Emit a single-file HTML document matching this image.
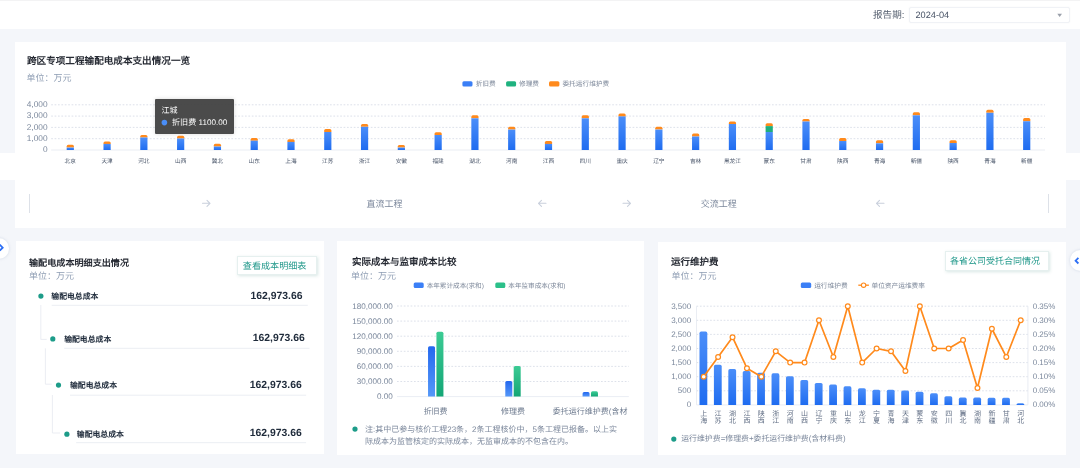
<!DOCTYPE html>
<html lang="zh-CN"><head><meta charset="utf-8">
<style>
html,body{margin:0;padding:0;}
*{text-rendering:geometricPrecision;}
body{width:1080px;height:468px;overflow:hidden;background:#f4f6fa;position:relative;font-family:"Liberation Sans", sans-serif;}
.abs{position:absolute;}
.card{position:absolute;background:#fff;}
.t{position:absolute;white-space:nowrap;line-height:1;}
svg{position:absolute;left:0;top:0;overflow:visible;}
svg text{font-family:"Liberation Sans", sans-serif;}
#root{position:absolute;left:0;top:0;width:1080px;height:468px;will-change:transform;background:#f4f6fa;}
</style></head><body><div id="root">
<!-- header -->
<div class="abs" style="left:0;top:0;width:1080px;height:1px;background:#f3f3f4"></div>
<div class="abs" style="left:0;top:1px;width:1080px;height:28px;background:#fff"></div>
<div class="t" style="left:873px;top:10.5px;font-size:9.6px;color:#566070">报告期:</div>
<div class="abs" style="left:909.3px;top:7.3px;width:160.5px;height:15.5px;box-sizing:border-box;border:1px solid #f0f2f6;border-radius:2px;background:#fff;box-shadow:0 0 2px rgba(0,0,0,0.04)"></div>
<div class="t" style="left:915.5px;top:10.5px;font-size:9.2px;color:#465164">2024-04</div>
<svg width="1080" height="468" style="z-index:2"><path d="M1057.3,13.8 L1062,13.8 L1059.65,16.9 Z" fill="#9aa0aa"/></svg>

<!-- top card -->
<div class="card" style="left:15px;top:42px;width:1051px;height:186px"></div>
<div class="abs" style="left:0;top:153px;width:1080px;height:27px;background:#fff"></div>
<div class="t" style="left:27px;top:56.5px;font-size:9.6px;font-weight:bold;color:#262a33">跨区专项工程输配电成本支出情况一览</div>
<div class="t" style="left:26.5px;top:74px;font-size:9px;color:#8e9db3">单位：万元</div>

<svg width="1080" height="468">
<defs>
<linearGradient id="gBlue" x1="0" y1="0" x2="0" y2="1"><stop offset="0" stop-color="#4b8ef9"/><stop offset="1" stop-color="#1f6cf0"/></linearGradient>
<linearGradient id="gBlue2" x1="0" y1="0" x2="0" y2="1"><stop offset="0" stop-color="#2468ef"/><stop offset="1" stop-color="#5598f8"/></linearGradient>
<linearGradient id="gGreen" x1="0" y1="0" x2="0" y2="1"><stop offset="0" stop-color="#3ccb94"/><stop offset="1" stop-color="#14a676"/></linearGradient>
</defs>
<!-- top legend -->
<rect x="462.4" y="81.2" width="10.1" height="5.3" rx="1.5" fill="#3b7ff6"/>
<text x="475.7" y="86.2" font-size="6.7" fill="#7d889a">折旧费</text>
<rect x="506.1" y="81.2" width="10" height="5.3" rx="1.5" fill="#1fb27f"/>
<text x="519" y="86.2" font-size="6.7" fill="#7d889a">修理费</text>
<rect x="549" y="81.2" width="10.4" height="5.3" rx="1.5" fill="#ff8a1c"/>
<text x="562.4" y="86.2" font-size="6.7" fill="#7d889a">委托运行维护费</text>
<line x1="51.2" y1="138.70" x2="1045" y2="138.70" stroke="#d9dee8" stroke-width="0.9" stroke-dasharray="1.7,1.7"/>
<line x1="51.2" y1="127.40" x2="1045" y2="127.40" stroke="#d9dee8" stroke-width="0.9" stroke-dasharray="1.7,1.7"/>
<line x1="51.2" y1="116.10" x2="1045" y2="116.10" stroke="#d9dee8" stroke-width="0.9" stroke-dasharray="1.7,1.7"/>
<line x1="51.2" y1="104.80" x2="1045" y2="104.80" stroke="#d9dee8" stroke-width="0.9" stroke-dasharray="1.7,1.7"/>
<line x1="51.2" y1="150" x2="1045" y2="150" stroke="#e4e8f0" stroke-width="0.8"/>
<text x="47.5" y="152.20" font-size="8.3" fill="#7b889c" font-weight="normal" text-anchor="end" >0</text>
<text x="47.5" y="140.90" font-size="8.3" fill="#7b889c" font-weight="normal" text-anchor="end" >1,000</text>
<text x="47.5" y="129.60" font-size="8.3" fill="#7b889c" font-weight="normal" text-anchor="end" >2,000</text>
<text x="47.5" y="118.30" font-size="8.3" fill="#7b889c" font-weight="normal" text-anchor="end" >3,000</text>
<text x="47.5" y="107.00" font-size="8.3" fill="#7b889c" font-weight="normal" text-anchor="end" >4,000</text>
<path d="M66.69,147.60 V146.20 Q66.69,144.70 68.19,144.70 H72.39 Q73.89,144.70 73.89,146.20 V147.60 Z" fill="#ff8a1c"/>
<rect x="66.69" y="147.60" width="7.2" height="2.4" fill="url(#gBlue)"/>
<text x="70.29" y="162.6" font-size="5.7" fill="#4a566a" font-weight="normal" text-anchor="middle" >北京</text>
<path d="M103.48,143.90 V142.90 Q103.48,141.40 104.98,141.40 H109.18 Q110.68,141.40 110.68,142.90 V143.90 Z" fill="#ff8a1c"/>
<rect x="103.48" y="143.90" width="7.2" height="6.1" fill="url(#gBlue)"/>
<text x="107.08" y="162.6" font-size="5.7" fill="#4a566a" font-weight="normal" text-anchor="middle" >天津</text>
<path d="M140.26,137.50 V136.50 Q140.26,135.00 141.76,135.00 H145.96 Q147.46,135.00 147.46,136.50 V137.50 Z" fill="#ff8a1c"/>
<rect x="140.26" y="137.50" width="7.2" height="12.5" fill="url(#gBlue)"/>
<text x="143.86" y="162.6" font-size="5.7" fill="#4a566a" font-weight="normal" text-anchor="middle" >河北</text>
<path d="M177.05,138.50 V137.30 Q177.05,135.80 178.55,135.80 H182.75 Q184.25,135.80 184.25,137.30 V138.50 Z" fill="#ff8a1c"/>
<rect x="177.05" y="138.50" width="7.2" height="11.5" fill="url(#gBlue)"/>
<text x="180.65" y="162.6" font-size="5.7" fill="#4a566a" font-weight="normal" text-anchor="middle" >山西</text>
<path d="M213.83,146.50 V145.25 Q213.83,143.75 215.33,143.75 H219.53 Q221.03,143.75 221.03,145.25 V146.50 Z" fill="#ff8a1c"/>
<rect x="213.83" y="146.50" width="7.2" height="3.5" fill="url(#gBlue)"/>
<text x="217.43" y="162.6" font-size="5.7" fill="#4a566a" font-weight="normal" text-anchor="middle" >冀北</text>
<path d="M250.62,140.70 V139.40 Q250.62,137.90 252.12,137.90 H256.32 Q257.82,137.90 257.82,139.40 V140.70 Z" fill="#ff8a1c"/>
<rect x="250.62" y="140.70" width="7.2" height="9.3" fill="url(#gBlue)"/>
<text x="254.22" y="162.6" font-size="5.7" fill="#4a566a" font-weight="normal" text-anchor="middle" >山东</text>
<path d="M287.40,141.90 V140.70 Q287.40,139.20 288.90,139.20 H293.10 Q294.60,139.20 294.60,140.70 V141.90 Z" fill="#ff8a1c"/>
<rect x="287.40" y="141.90" width="7.2" height="8.1" fill="url(#gBlue)"/>
<text x="291.00" y="162.6" font-size="5.7" fill="#4a566a" font-weight="normal" text-anchor="middle" >上海</text>
<path d="M324.19,132.00 V130.40 Q324.19,128.90 325.69,128.90 H329.89 Q331.39,128.90 331.39,130.40 V132.00 Z" fill="#ff8a1c"/>
<rect x="324.19" y="132.00" width="7.2" height="18" fill="url(#gBlue)"/>
<text x="327.79" y="162.6" font-size="5.7" fill="#4a566a" font-weight="normal" text-anchor="middle" >江苏</text>
<path d="M360.97,126.80 V125.40 Q360.97,123.90 362.47,123.90 H366.67 Q368.17,123.90 368.17,125.40 V126.80 Z" fill="#ff8a1c"/>
<rect x="360.97" y="126.80" width="7.2" height="23.2" fill="url(#gBlue)"/>
<text x="364.57" y="162.6" font-size="5.7" fill="#4a566a" font-weight="normal" text-anchor="middle" >浙江</text>
<path d="M397.76,147.60 V146.40 Q397.76,144.90 399.26,144.90 H403.46 Q404.96,144.90 404.96,146.40 V147.60 Z" fill="#ff8a1c"/>
<rect x="397.76" y="147.60" width="7.2" height="2.4" fill="url(#gBlue)"/>
<text x="401.36" y="162.6" font-size="5.7" fill="#4a566a" font-weight="normal" text-anchor="middle" >安徽</text>
<path d="M434.54,135.00 V133.70 Q434.54,132.20 436.04,132.20 H440.24 Q441.74,132.20 441.74,133.70 V135.00 Z" fill="#ff8a1c"/>
<rect x="434.54" y="135.00" width="7.2" height="15" fill="url(#gBlue)"/>
<text x="438.14" y="162.6" font-size="5.7" fill="#4a566a" font-weight="normal" text-anchor="middle" >福建</text>
<path d="M471.33,118.30 V116.80 Q471.33,115.30 472.83,115.30 H477.03 Q478.53,115.30 478.53,116.80 V118.30 Z" fill="#ff8a1c"/>
<rect x="471.33" y="118.30" width="7.2" height="31.7" fill="url(#gBlue)"/>
<text x="474.93" y="162.6" font-size="5.7" fill="#4a566a" font-weight="normal" text-anchor="middle" >湖北</text>
<path d="M508.11,129.60 V128.20 Q508.11,126.70 509.61,126.70 H513.81 Q515.31,126.70 515.31,128.20 V129.60 Z" fill="#ff8a1c"/>
<rect x="508.11" y="129.60" width="7.2" height="20.4" fill="url(#gBlue)"/>
<text x="511.71" y="162.6" font-size="5.7" fill="#4a566a" font-weight="normal" text-anchor="middle" >河南</text>
<path d="M544.90,143.90 V142.50 Q544.90,141.00 546.40,141.00 H550.60 Q552.10,141.00 552.10,142.50 V143.90 Z" fill="#ff8a1c"/>
<rect x="544.90" y="143.90" width="7.2" height="6.1" fill="url(#gBlue)"/>
<text x="548.50" y="162.6" font-size="5.7" fill="#4a566a" font-weight="normal" text-anchor="middle" >江西</text>
<path d="M581.69,118.30 V116.80 Q581.69,115.30 583.19,115.30 H587.39 Q588.89,115.30 588.89,116.80 V118.30 Z" fill="#ff8a1c"/>
<rect x="581.69" y="118.30" width="7.2" height="31.7" fill="url(#gBlue)"/>
<text x="585.29" y="162.6" font-size="5.7" fill="#4a566a" font-weight="normal" text-anchor="middle" >四川</text>
<path d="M618.47,116.40 V115.00 Q618.47,113.50 619.97,113.50 H624.17 Q625.67,113.50 625.67,115.00 V116.40 Z" fill="#ff8a1c"/>
<rect x="618.47" y="116.40" width="7.2" height="33.6" fill="url(#gBlue)"/>
<text x="622.07" y="162.6" font-size="5.7" fill="#4a566a" font-weight="normal" text-anchor="middle" >重庆</text>
<path d="M655.26,129.60 V128.20 Q655.26,126.70 656.76,126.70 H660.96 Q662.46,126.70 662.46,128.20 V129.60 Z" fill="#ff8a1c"/>
<rect x="655.26" y="129.60" width="7.2" height="20.4" fill="url(#gBlue)"/>
<text x="658.86" y="162.6" font-size="5.7" fill="#4a566a" font-weight="normal" text-anchor="middle" >辽宁</text>
<path d="M692.04,136.50 V135.10 Q692.04,133.60 693.54,133.60 H697.74 Q699.24,133.60 699.24,135.10 V136.50 Z" fill="#ff8a1c"/>
<rect x="692.04" y="136.50" width="7.2" height="13.5" fill="url(#gBlue)"/>
<text x="695.64" y="162.6" font-size="5.7" fill="#4a566a" font-weight="normal" text-anchor="middle" >吉林</text>
<path d="M728.83,124.00 V123.00 Q728.83,121.50 730.33,121.50 H734.53 Q736.03,121.50 736.03,123.00 V124.00 Z" fill="#ff8a1c"/>
<rect x="728.83" y="124.00" width="7.2" height="26" fill="url(#gBlue)"/>
<text x="732.43" y="162.6" font-size="5.7" fill="#4a566a" font-weight="normal" text-anchor="middle" >黑龙江</text>
<path d="M765.61,126.10 V124.80 Q765.61,123.30 767.11,123.30 H771.31 Q772.81,123.30 772.81,124.80 V126.10 Z" fill="#ff8a1c"/>
<rect x="765.61" y="126.10" width="7.2" height="5.9" fill="#1fae7d"/>
<rect x="765.61" y="132.00" width="7.2" height="18" fill="url(#gBlue)"/>
<text x="769.21" y="162.6" font-size="5.7" fill="#4a566a" font-weight="normal" text-anchor="middle" >蒙东</text>
<path d="M802.40,121.50 V120.50 Q802.40,119.00 803.90,119.00 H808.10 Q809.60,119.00 809.60,120.50 V121.50 Z" fill="#ff8a1c"/>
<rect x="802.40" y="121.50" width="7.2" height="28.5" fill="url(#gBlue)"/>
<text x="806.00" y="162.6" font-size="5.7" fill="#4a566a" font-weight="normal" text-anchor="middle" >甘肃</text>
<path d="M839.18,141.00 V139.40 Q839.18,137.90 840.68,137.90 H844.88 Q846.38,137.90 846.38,139.40 V141.00 Z" fill="#ff8a1c"/>
<rect x="839.18" y="141.00" width="7.2" height="9" fill="url(#gBlue)"/>
<text x="842.78" y="162.6" font-size="5.7" fill="#4a566a" font-weight="normal" text-anchor="middle" >陕西</text>
<path d="M875.97,143.30 V141.80 Q875.97,140.30 877.47,140.30 H881.67 Q883.17,140.30 883.17,141.80 V143.30 Z" fill="#ff8a1c"/>
<rect x="875.97" y="143.30" width="7.2" height="6.7" fill="url(#gBlue)"/>
<text x="879.57" y="162.6" font-size="5.7" fill="#4a566a" font-weight="normal" text-anchor="middle" >青海</text>
<path d="M912.75,115.30 V113.70 Q912.75,112.20 914.25,112.20 H918.45 Q919.95,112.20 919.95,113.70 V115.30 Z" fill="#ff8a1c"/>
<rect x="912.75" y="115.30" width="7.2" height="34.7" fill="url(#gBlue)"/>
<text x="916.35" y="162.6" font-size="5.7" fill="#4a566a" font-weight="normal" text-anchor="middle" >新疆</text>
<path d="M949.54,143.00 V141.80 Q949.54,140.30 951.04,140.30 H955.24 Q956.74,140.30 956.74,141.80 V143.00 Z" fill="#ff8a1c"/>
<rect x="949.54" y="143.00" width="7.2" height="7" fill="url(#gBlue)"/>
<text x="953.14" y="162.6" font-size="5.7" fill="#4a566a" font-weight="normal" text-anchor="middle" >陕西</text>
<path d="M986.32,112.80 V111.20 Q986.32,109.70 987.82,109.70 H992.02 Q993.52,109.70 993.52,111.20 V112.80 Z" fill="#ff8a1c"/>
<rect x="986.32" y="112.80" width="7.2" height="37.2" fill="url(#gBlue)"/>
<text x="989.92" y="162.6" font-size="5.7" fill="#4a566a" font-weight="normal" text-anchor="middle" >青海</text>
<path d="M1023.11,121.25 V119.50 Q1023.11,118.00 1024.61,118.00 H1028.81 Q1030.31,118.00 1030.31,119.50 V121.25 Z" fill="#ff8a1c"/>
<rect x="1023.11" y="121.25" width="7.2" height="28.75" fill="url(#gBlue)"/>
<text x="1026.71" y="162.6" font-size="5.7" fill="#4a566a" font-weight="normal" text-anchor="middle" >新疆</text>
</svg>


<!-- tooltip -->
<div class="abs" style="left:155.3px;top:98.9px;width:78.5px;height:35px;background:rgba(60,60,60,0.92);border-radius:1px;box-shadow:0 0 4px rgba(0,0,0,0.15)"></div>
<div class="t" style="left:161.5px;top:106.8px;font-size:8px;color:#fff">江城</div>
<svg width="1080" height="468"><circle cx="164.4" cy="122.6" r="2.8" fill="#4a8ef8"/></svg>
<div class="t" style="left:172px;top:118.8px;font-size:8.1px;color:#fff">折旧费 1100.00</div>

<!-- tabs row -->
<div class="abs" style="left:29px;top:194px;width:1px;height:19px;background:#dde1e8"></div>
<div class="abs" style="left:1048px;top:194px;width:1px;height:19px;background:#dde1e8"></div>
<svg width="1080" height="468">
<g stroke="#c9d0dc" stroke-width="1.1" fill="none" stroke-linecap="round" stroke-linejoin="round">
<path d="M202.5,203.3 H210 M207,200.3 L210,203.3 L207,206.3"/>
<path d="M546,203.3 H538.5 M541.5,200.3 L538.5,203.3 L541.5,206.3"/>
<path d="M623,203.3 H630.5 M627.5,200.3 L630.5,203.3 L627.5,206.3"/>
<path d="M884,203.3 H876.5 M879.5,200.3 L876.5,203.3 L879.5,206.3"/>
</g>
</svg>
<div class="t" style="left:366.5px;top:199.5px;font-size:9px;color:#7c889c">直流工程</div>
<div class="t" style="left:700.8px;top:199.5px;font-size:9px;color:#7c889c">交流工程</div>

<!-- side buttons -->
<div class="abs" style="left:-12px;top:238px;width:20.6px;height:20.6px;border-radius:50%;background:#fff;box-shadow:0 0 3px rgba(120,140,180,0.28)"></div>
<svg width="1080" height="468"><path d="M-0.3,244.7 L2.7,247.7 L-0.3,250.7" stroke="#2d6ff5" stroke-width="1.8" fill="none"/></svg>
<div class="abs" style="left:1069.6px;top:250.3px;width:21px;height:21px;border-radius:50%;background:#fff;box-shadow:0 0 3px rgba(120,140,180,0.28)"></div>
<svg width="1080" height="468"><path d="M1078.4,257.9 L1075.6,260.7 L1078.4,263.5" stroke="#2d6ff5" stroke-width="1.8" fill="none"/></svg>

<!-- bottom cards -->
<div class="card" style="left:15.8px;top:241px;width:308.4px;height:213.2px"></div>
<div class="card" style="left:336.5px;top:240.5px;width:307.2px;height:214px"></div>
<div class="card" style="left:657.8px;top:241.5px;width:408.4px;height:213.8px"></div>


<!-- mid card -->
<div class="t" style="left:352px;top:258px;font-size:9.5px;font-weight:bold;color:#262a33">实际成本与监审成本比较</div>
<div class="t" style="left:351px;top:271.5px;font-size:9px;color:#8e9db3">单位：万元</div>
<svg width="1080" height="468">
<rect x="413.7" y="282.6" width="10" height="5.4" rx="1.5" fill="#3b7ff6"/>
<text x="426.7" y="287.6" font-size="6.6" fill="#7d889a">本年累计成本(求和)</text>
<rect x="495.3" y="282.6" width="10" height="5.4" rx="1.5" fill="#2cc08a"/>
<text x="508.3" y="287.6" font-size="6.6" fill="#7d889a">本年监审成本(求和)</text>
<line x1="397" y1="381.50" x2="628.8" y2="381.50" stroke="#d9dee8" stroke-width="0.9" stroke-dasharray="1.7,1.7"/>
<line x1="397" y1="366.40" x2="628.8" y2="366.40" stroke="#d9dee8" stroke-width="0.9" stroke-dasharray="1.7,1.7"/>
<line x1="397" y1="351.30" x2="628.8" y2="351.30" stroke="#d9dee8" stroke-width="0.9" stroke-dasharray="1.7,1.7"/>
<line x1="397" y1="336.20" x2="628.8" y2="336.20" stroke="#d9dee8" stroke-width="0.9" stroke-dasharray="1.7,1.7"/>
<line x1="397" y1="321.10" x2="628.8" y2="321.10" stroke="#d9dee8" stroke-width="0.9" stroke-dasharray="1.7,1.7"/>
<line x1="397" y1="306.00" x2="628.8" y2="306.00" stroke="#d9dee8" stroke-width="0.9" stroke-dasharray="1.7,1.7"/>
<line x1="397" y1="396.6" x2="628.8" y2="396.6" stroke="#e4e8f0" stroke-width="0.8"/>
<text x="392.8" y="399.10" font-size="8.1" fill="#7b889c" font-weight="normal" text-anchor="end" >0.00</text>
<text x="392.8" y="384.00" font-size="8.1" fill="#7b889c" font-weight="normal" text-anchor="end" >30,000.00</text>
<text x="392.8" y="368.90" font-size="8.1" fill="#7b889c" font-weight="normal" text-anchor="end" >60,000.00</text>
<text x="392.8" y="353.80" font-size="8.1" fill="#7b889c" font-weight="normal" text-anchor="end" >90,000.00</text>
<text x="392.8" y="338.70" font-size="8.1" fill="#7b889c" font-weight="normal" text-anchor="end" >120,000.00</text>
<text x="392.8" y="323.60" font-size="8.1" fill="#7b889c" font-weight="normal" text-anchor="end" >150,000.00</text>
<text x="392.8" y="308.50" font-size="8.1" fill="#7b889c" font-weight="normal" text-anchor="end" >180,000.00</text>
<path d="M428.03,396.6 V347.87 Q428.03,346.27 429.63,346.27 H433.43 Q435.03,346.27 435.03,347.87 V396.6 Z" fill="url(#gBlue2)"/>
<path d="M436.43,396.6 V333.27 Q436.43,331.67 438.03,331.67 H441.83 Q443.43,331.67 443.43,333.27 V396.6 Z" fill="url(#gGreen)"/>
<text x="435.63" y="413.5" font-size="8" fill="#6f7c90" font-weight="normal" text-anchor="middle" >折旧费</text>
<path d="M505.30,396.6 V382.60 Q505.30,381.00 506.90,381.00 H510.70 Q512.30,381.00 512.30,382.60 V396.6 Z" fill="url(#gBlue2)"/>
<path d="M513.70,396.6 V367.50 Q513.70,365.90 515.30,365.90 H519.10 Q520.70,365.90 520.70,367.50 V396.6 Z" fill="url(#gGreen)"/>
<text x="512.90" y="413.5" font-size="8" fill="#6f7c90" font-weight="normal" text-anchor="middle" >修理费</text>
<path d="M582.57,396.6 V393.67 Q582.57,392.07 584.17,392.07 H587.97 Q589.57,392.07 589.57,393.67 V396.6 Z" fill="url(#gBlue2)"/>
<path d="M590.97,396.6 V392.92 Q590.97,391.31 592.57,391.31 H596.37 Q597.97,391.31 597.97,392.92 V396.6 Z" fill="url(#gGreen)"/>
<text x="590.17" y="413.5" font-size="8" fill="#6f7c90" font-weight="normal" text-anchor="middle" >委托运行维护费(含材</text>
<circle cx="355" cy="429.1" r="2.6" fill="#1d9c89"/>
</svg>
<div class="abs" style="left:365px;top:424px;width:255px;font-size:8px;line-height:11.5px;color:#7c889c">注:其中已参与核价工程23条，2条工程核价中，5条工程已报备。以上实际成本为监管核定的实际成本，无监审成本的不包含在内。</div>

<!-- right card -->
<div class="t" style="left:671px;top:258px;font-size:9.5px;font-weight:bold;color:#262a33">运行维护费</div>
<div class="t" style="left:671.5px;top:271.5px;font-size:9px;color:#8e9db3">单位：万元</div>
<div class="abs" style="left:945px;top:250.5px;width:104px;height:20px;box-sizing:border-box;border:1px solid #e6f0ef;background:#fff;box-shadow:1px 1px 3px rgba(40,120,110,0.18)"></div>
<div class="t" style="left:950px;top:257px;font-size:9px;color:#20988a">各省公司受托合同情况</div>
<svg width="1080" height="468">
<rect x="800.8" y="282.5" width="10.4" height="5.5" rx="1.5" fill="#3b7ff6"/>
<text x="814.2" y="287.7" font-size="6.7" fill="#7d889a">运行维护费</text>
<line x1="858.3" y1="285.2" x2="868.9" y2="285.2" stroke="#ff8a1c" stroke-width="1.3"/>
<circle cx="863.6" cy="285.2" r="2.2" fill="#fff" stroke="#ff8a1c" stroke-width="1.1"/>
<text x="871.5" y="287.7" font-size="6.7" fill="#7d889a">单位资产运维费率</text>
<line x1="696.5" y1="390.80" x2="1027.9" y2="390.80" stroke="#d9dee8" stroke-width="0.9" stroke-dasharray="1.7,1.7"/>
<line x1="696.5" y1="376.70" x2="1027.9" y2="376.70" stroke="#d9dee8" stroke-width="0.9" stroke-dasharray="1.7,1.7"/>
<line x1="696.5" y1="362.60" x2="1027.9" y2="362.60" stroke="#d9dee8" stroke-width="0.9" stroke-dasharray="1.7,1.7"/>
<line x1="696.5" y1="348.50" x2="1027.9" y2="348.50" stroke="#d9dee8" stroke-width="0.9" stroke-dasharray="1.7,1.7"/>
<line x1="696.5" y1="334.40" x2="1027.9" y2="334.40" stroke="#d9dee8" stroke-width="0.9" stroke-dasharray="1.7,1.7"/>
<line x1="696.5" y1="320.30" x2="1027.9" y2="320.30" stroke="#d9dee8" stroke-width="0.9" stroke-dasharray="1.7,1.7"/>
<line x1="696.5" y1="306.20" x2="1027.9" y2="306.20" stroke="#d9dee8" stroke-width="0.9" stroke-dasharray="1.7,1.7"/>
<line x1="696.5" y1="404.9" x2="1027.9" y2="404.9" stroke="#e4e8f0" stroke-width="0.8"/>
<line x1="696.5" y1="306.20" x2="696.5" y2="404.9" stroke="#e4e8f0" stroke-width="0.8"/>
<line x1="1027.9" y1="306.20" x2="1027.9" y2="404.9" stroke="#e4e8f0" stroke-width="0.8"/>
<text x="691.2" y="406.50" font-size="8" fill="#7b889c" font-weight="normal" text-anchor="end" >0</text>
<text x="1032.7" y="406.70" font-size="8" fill="#7b889c" font-weight="normal" text-anchor="start" >0.00%</text>
<text x="691.2" y="392.50" font-size="8" fill="#7b889c" font-weight="normal" text-anchor="end" >500</text>
<text x="1032.7" y="392.70" font-size="8" fill="#7b889c" font-weight="normal" text-anchor="start" >0.05%</text>
<text x="691.2" y="378.50" font-size="8" fill="#7b889c" font-weight="normal" text-anchor="end" >1,000</text>
<text x="1032.7" y="378.70" font-size="8" fill="#7b889c" font-weight="normal" text-anchor="start" >0.10%</text>
<text x="691.2" y="364.50" font-size="8" fill="#7b889c" font-weight="normal" text-anchor="end" >1,500</text>
<text x="1032.7" y="364.70" font-size="8" fill="#7b889c" font-weight="normal" text-anchor="start" >0.15%</text>
<text x="691.2" y="350.50" font-size="8" fill="#7b889c" font-weight="normal" text-anchor="end" >2,000</text>
<text x="1032.7" y="350.70" font-size="8" fill="#7b889c" font-weight="normal" text-anchor="start" >0.20%</text>
<text x="691.2" y="336.50" font-size="8" fill="#7b889c" font-weight="normal" text-anchor="end" >2,500</text>
<text x="1032.7" y="336.70" font-size="8" fill="#7b889c" font-weight="normal" text-anchor="start" >0.25%</text>
<text x="691.2" y="322.50" font-size="8" fill="#7b889c" font-weight="normal" text-anchor="end" >3,000</text>
<text x="1032.7" y="322.70" font-size="8" fill="#7b889c" font-weight="normal" text-anchor="start" >0.30%</text>
<text x="691.2" y="308.50" font-size="8" fill="#7b889c" font-weight="normal" text-anchor="end" >3,500</text>
<text x="1032.7" y="308.70" font-size="8" fill="#7b889c" font-weight="normal" text-anchor="start" >0.35%</text>
<path d="M699.50,404.9 V333.18 Q699.50,331.58 701.10,331.58 H705.70 Q707.30,331.58 707.30,333.18 V404.9 Z" fill="url(#gBlue)"/>
<text x="703.70" y="415.8" font-size="7" fill="#637086" font-weight="normal" text-anchor="middle" >上</text>
<text x="703.70" y="423.3" font-size="7" fill="#637086" font-weight="normal" text-anchor="middle" >海</text>
<path d="M713.91,404.9 V366.46 Q713.91,364.86 715.51,364.86 H720.11 Q721.71,364.86 721.71,366.46 V404.9 Z" fill="url(#gBlue)"/>
<text x="718.11" y="415.8" font-size="7" fill="#637086" font-weight="normal" text-anchor="middle" >江</text>
<text x="718.11" y="423.3" font-size="7" fill="#637086" font-weight="normal" text-anchor="middle" >苏</text>
<path d="M728.32,404.9 V370.69 Q728.32,369.09 729.92,369.09 H734.52 Q736.12,369.09 736.12,370.69 V404.9 Z" fill="url(#gBlue)"/>
<text x="732.52" y="415.8" font-size="7" fill="#637086" font-weight="normal" text-anchor="middle" >湖</text>
<text x="732.52" y="423.3" font-size="7" fill="#637086" font-weight="normal" text-anchor="middle" >北</text>
<path d="M742.73,404.9 V372.66 Q742.73,371.06 744.33,371.06 H748.93 Q750.53,371.06 750.53,372.66 V404.9 Z" fill="url(#gBlue)"/>
<text x="746.93" y="415.8" font-size="7" fill="#637086" font-weight="normal" text-anchor="middle" >江</text>
<text x="746.93" y="423.3" font-size="7" fill="#637086" font-weight="normal" text-anchor="middle" >西</text>
<path d="M757.14,404.9 V374.35 Q757.14,372.75 758.74,372.75 H763.34 Q764.94,372.75 764.94,374.35 V404.9 Z" fill="url(#gBlue)"/>
<text x="761.34" y="415.8" font-size="7" fill="#637086" font-weight="normal" text-anchor="middle" >陕</text>
<text x="761.34" y="423.3" font-size="7" fill="#637086" font-weight="normal" text-anchor="middle" >西</text>
<path d="M771.55,404.9 V374.92 Q771.55,373.32 773.15,373.32 H777.75 Q779.35,373.32 779.35,374.92 V404.9 Z" fill="url(#gBlue)"/>
<text x="775.75" y="415.8" font-size="7" fill="#637086" font-weight="normal" text-anchor="middle" >浙</text>
<text x="775.75" y="423.3" font-size="7" fill="#637086" font-weight="normal" text-anchor="middle" >江</text>
<path d="M785.96,404.9 V377.74 Q785.96,376.14 787.56,376.14 H792.16 Q793.76,376.14 793.76,377.74 V404.9 Z" fill="url(#gBlue)"/>
<text x="790.16" y="415.8" font-size="7" fill="#637086" font-weight="normal" text-anchor="middle" >河</text>
<text x="790.16" y="423.3" font-size="7" fill="#637086" font-weight="normal" text-anchor="middle" >南</text>
<path d="M800.37,404.9 V381.68 Q800.37,380.08 801.97,380.08 H806.57 Q808.17,380.08 808.17,381.68 V404.9 Z" fill="url(#gBlue)"/>
<text x="804.57" y="415.8" font-size="7" fill="#637086" font-weight="normal" text-anchor="middle" >山</text>
<text x="804.57" y="423.3" font-size="7" fill="#637086" font-weight="normal" text-anchor="middle" >西</text>
<path d="M814.77,404.9 V384.50 Q814.77,382.90 816.37,382.90 H820.97 Q822.57,382.90 822.57,384.50 V404.9 Z" fill="url(#gBlue)"/>
<text x="818.97" y="415.8" font-size="7" fill="#637086" font-weight="normal" text-anchor="middle" >辽</text>
<text x="818.97" y="423.3" font-size="7" fill="#637086" font-weight="normal" text-anchor="middle" >宁</text>
<path d="M829.18,404.9 V386.20 Q829.18,384.60 830.78,384.60 H835.38 Q836.98,384.60 836.98,386.20 V404.9 Z" fill="url(#gBlue)"/>
<text x="833.38" y="415.8" font-size="7" fill="#637086" font-weight="normal" text-anchor="middle" >重</text>
<text x="833.38" y="423.3" font-size="7" fill="#637086" font-weight="normal" text-anchor="middle" >庆</text>
<path d="M843.59,404.9 V387.89 Q843.59,386.29 845.19,386.29 H849.79 Q851.39,386.29 851.39,387.89 V404.9 Z" fill="url(#gBlue)"/>
<text x="847.79" y="415.8" font-size="7" fill="#637086" font-weight="normal" text-anchor="middle" >山</text>
<text x="847.79" y="423.3" font-size="7" fill="#637086" font-weight="normal" text-anchor="middle" >东</text>
<path d="M858.00,404.9 V389.86 Q858.00,388.26 859.60,388.26 H864.20 Q865.80,388.26 865.80,389.86 V404.9 Z" fill="url(#gBlue)"/>
<text x="862.20" y="415.8" font-size="7" fill="#637086" font-weight="normal" text-anchor="middle" >龙</text>
<text x="862.20" y="423.3" font-size="7" fill="#637086" font-weight="normal" text-anchor="middle" >江</text>
<path d="M872.41,404.9 V391.27 Q872.41,389.67 874.01,389.67 H878.61 Q880.21,389.67 880.21,391.27 V404.9 Z" fill="url(#gBlue)"/>
<text x="876.61" y="415.8" font-size="7" fill="#637086" font-weight="normal" text-anchor="middle" >宁</text>
<text x="876.61" y="423.3" font-size="7" fill="#637086" font-weight="normal" text-anchor="middle" >夏</text>
<path d="M886.82,404.9 V391.27 Q886.82,389.67 888.42,389.67 H893.02 Q894.62,389.67 894.62,391.27 V404.9 Z" fill="url(#gBlue)"/>
<text x="891.02" y="415.8" font-size="7" fill="#637086" font-weight="normal" text-anchor="middle" >青</text>
<text x="891.02" y="423.3" font-size="7" fill="#637086" font-weight="normal" text-anchor="middle" >海</text>
<path d="M901.23,404.9 V392.12 Q901.23,390.52 902.83,390.52 H907.43 Q909.03,390.52 909.03,392.12 V404.9 Z" fill="url(#gBlue)"/>
<text x="905.43" y="415.8" font-size="7" fill="#637086" font-weight="normal" text-anchor="middle" >天</text>
<text x="905.43" y="423.3" font-size="7" fill="#637086" font-weight="normal" text-anchor="middle" >津</text>
<path d="M915.63,404.9 V393.25 Q915.63,391.65 917.23,391.65 H921.83 Q923.43,391.65 923.43,393.25 V404.9 Z" fill="url(#gBlue)"/>
<text x="919.83" y="415.8" font-size="7" fill="#637086" font-weight="normal" text-anchor="middle" >蒙</text>
<text x="919.83" y="423.3" font-size="7" fill="#637086" font-weight="normal" text-anchor="middle" >东</text>
<path d="M930.04,404.9 V394.94 Q930.04,393.34 931.64,393.34 H936.24 Q937.84,393.34 937.84,394.94 V404.9 Z" fill="url(#gBlue)"/>
<text x="934.24" y="415.8" font-size="7" fill="#637086" font-weight="normal" text-anchor="middle" >安</text>
<text x="934.24" y="423.3" font-size="7" fill="#637086" font-weight="normal" text-anchor="middle" >徽</text>
<path d="M944.45,404.9 V397.76 Q944.45,396.16 946.05,396.16 H950.65 Q952.25,396.16 952.25,397.76 V404.9 Z" fill="url(#gBlue)"/>
<text x="948.65" y="415.8" font-size="7" fill="#637086" font-weight="normal" text-anchor="middle" >四</text>
<text x="948.65" y="423.3" font-size="7" fill="#637086" font-weight="normal" text-anchor="middle" >川</text>
<path d="M958.86,404.9 V399.17 Q958.86,397.57 960.46,397.57 H965.06 Q966.66,397.57 966.66,399.17 V404.9 Z" fill="url(#gBlue)"/>
<text x="963.06" y="415.8" font-size="7" fill="#637086" font-weight="normal" text-anchor="middle" >冀</text>
<text x="963.06" y="423.3" font-size="7" fill="#637086" font-weight="normal" text-anchor="middle" >北</text>
<path d="M973.27,404.9 V399.17 Q973.27,397.57 974.87,397.57 H979.47 Q981.07,397.57 981.07,399.17 V404.9 Z" fill="url(#gBlue)"/>
<text x="977.47" y="415.8" font-size="7" fill="#637086" font-weight="normal" text-anchor="middle" >湖</text>
<text x="977.47" y="423.3" font-size="7" fill="#637086" font-weight="normal" text-anchor="middle" >南</text>
<path d="M987.68,404.9 V399.45 Q987.68,397.85 989.28,397.85 H993.88 Q995.48,397.85 995.48,399.45 V404.9 Z" fill="url(#gBlue)"/>
<text x="991.88" y="415.8" font-size="7" fill="#637086" font-weight="normal" text-anchor="middle" >新</text>
<text x="991.88" y="423.3" font-size="7" fill="#637086" font-weight="normal" text-anchor="middle" >疆</text>
<path d="M1002.09,404.9 V399.45 Q1002.09,397.85 1003.69,397.85 H1008.29 Q1009.89,397.85 1009.89,399.45 V404.9 Z" fill="url(#gBlue)"/>
<text x="1006.29" y="415.8" font-size="7" fill="#637086" font-weight="normal" text-anchor="middle" >甘</text>
<text x="1006.29" y="423.3" font-size="7" fill="#637086" font-weight="normal" text-anchor="middle" >肃</text>
<path d="M1016.50,404.9 V404.81 Q1016.50,403.21 1018.10,403.21 H1022.70 Q1024.30,403.21 1024.30,404.81 V404.9 Z" fill="url(#gBlue)"/>
<text x="1020.70" y="415.8" font-size="7" fill="#637086" font-weight="normal" text-anchor="middle" >河</text>
<text x="1020.70" y="423.3" font-size="7" fill="#637086" font-weight="normal" text-anchor="middle" >北</text>
<path d="M703.70,376.70 L718.11,356.96 L732.52,337.22 L746.93,368.24 L761.34,376.70 L775.75,351.32 L790.16,362.60 L804.57,362.60 L818.97,320.30 L833.38,356.96 L847.79,306.20 L862.20,362.60 L876.61,348.50 L891.02,351.32 L905.43,371.06 L919.83,306.20 L934.24,348.50 L948.65,348.50 L963.06,340.04 L977.47,387.98 L991.88,328.76 L1006.29,356.96 L1020.70,320.30" stroke="#ff8a1c" stroke-width="1.7" fill="none" stroke-linejoin="round"/>
<circle cx="703.70" cy="376.70" r="2.4" fill="#fff" stroke="#ff8a1c" stroke-width="1.2"/>
<circle cx="718.11" cy="356.96" r="2.4" fill="#fff" stroke="#ff8a1c" stroke-width="1.2"/>
<circle cx="732.52" cy="337.22" r="2.4" fill="#fff" stroke="#ff8a1c" stroke-width="1.2"/>
<circle cx="746.93" cy="368.24" r="2.4" fill="#fff" stroke="#ff8a1c" stroke-width="1.2"/>
<circle cx="761.34" cy="376.70" r="2.4" fill="#fff" stroke="#ff8a1c" stroke-width="1.2"/>
<circle cx="775.75" cy="351.32" r="2.4" fill="#fff" stroke="#ff8a1c" stroke-width="1.2"/>
<circle cx="790.16" cy="362.60" r="2.4" fill="#fff" stroke="#ff8a1c" stroke-width="1.2"/>
<circle cx="804.57" cy="362.60" r="2.4" fill="#fff" stroke="#ff8a1c" stroke-width="1.2"/>
<circle cx="818.97" cy="320.30" r="2.4" fill="#fff" stroke="#ff8a1c" stroke-width="1.2"/>
<circle cx="833.38" cy="356.96" r="2.4" fill="#fff" stroke="#ff8a1c" stroke-width="1.2"/>
<circle cx="847.79" cy="306.20" r="2.4" fill="#fff" stroke="#ff8a1c" stroke-width="1.2"/>
<circle cx="862.20" cy="362.60" r="2.4" fill="#fff" stroke="#ff8a1c" stroke-width="1.2"/>
<circle cx="876.61" cy="348.50" r="2.4" fill="#fff" stroke="#ff8a1c" stroke-width="1.2"/>
<circle cx="891.02" cy="351.32" r="2.4" fill="#fff" stroke="#ff8a1c" stroke-width="1.2"/>
<circle cx="905.43" cy="371.06" r="2.4" fill="#fff" stroke="#ff8a1c" stroke-width="1.2"/>
<circle cx="919.83" cy="306.20" r="2.4" fill="#fff" stroke="#ff8a1c" stroke-width="1.2"/>
<circle cx="934.24" cy="348.50" r="2.4" fill="#fff" stroke="#ff8a1c" stroke-width="1.2"/>
<circle cx="948.65" cy="348.50" r="2.4" fill="#fff" stroke="#ff8a1c" stroke-width="1.2"/>
<circle cx="963.06" cy="340.04" r="2.4" fill="#fff" stroke="#ff8a1c" stroke-width="1.2"/>
<circle cx="977.47" cy="387.98" r="2.4" fill="#fff" stroke="#ff8a1c" stroke-width="1.2"/>
<circle cx="991.88" cy="328.76" r="2.4" fill="#fff" stroke="#ff8a1c" stroke-width="1.2"/>
<circle cx="1006.29" cy="356.96" r="2.4" fill="#fff" stroke="#ff8a1c" stroke-width="1.2"/>
<circle cx="1020.70" cy="320.30" r="2.4" fill="#fff" stroke="#ff8a1c" stroke-width="1.2"/>
<circle cx="673.8" cy="439.1" r="2.6" fill="#1d9c89"/>
</svg>
<div class="t" style="left:681.2px;top:435.3px;font-size:7.9px;color:#7c889c">运行维护费=修理费+委托运行维护费(含材料费)</div>

<!-- left card content -->
<div class="t" style="left:29px;top:258.5px;font-size:9.1px;font-weight:bold;color:#262a33">输配电成本明细支出情况</div>
<div class="t" style="left:29px;top:271.5px;font-size:9px;color:#8e9db3">单位：万元</div>
<div class="abs" style="left:237px;top:255.8px;width:79.5px;height:19.4px;box-sizing:border-box;border:1px solid #e6f0ef;background:#fff;box-shadow:1px 1px 3px rgba(40,120,110,0.18)"></div>
<div class="t" style="left:242.8px;top:262px;font-size:9.1px;color:#20988a">查看成本明细表</div>
<svg width="1080" height="468">
<g stroke="#e6e9f0" stroke-width="0.8" fill="none">
<path d="M40.8,305 V339.4 H46.7"/>
<path d="M45.4,348.3 V384.2 H51.8"/>
<path d="M52.4,395 V433 H60"/>
</g>
<g stroke="#e9ecf2" stroke-width="0.9">
<line x1="51.7" y1="305.3" x2="307.8" y2="305.3"/>
<line x1="64.2" y1="348.3" x2="309.5" y2="348.3"/>
<line x1="70" y1="395.2" x2="306.1" y2="395.2"/>
<line x1="76.2" y1="442.7" x2="306.1" y2="442.7"/>
</g>
<g fill="#1d9c89">
<circle cx="40.9" cy="296.1" r="2.6"/>
<circle cx="52.8" cy="338.9" r="2.6"/>
<circle cx="58.5" cy="385.1" r="2.6"/>
<circle cx="66.9" cy="434.2" r="2.6"/>
</g>
</svg>
<div class="t" style="left:51.3px;top:292.5px;font-size:7.85px;font-weight:bold;color:#1f2b3b">输配电总成本</div>
<div class="t" style="left:64.2px;top:335.5px;font-size:7.85px;font-weight:bold;color:#1f2b3b">输配电总成本</div>
<div class="t" style="left:70px;top:382px;font-size:7.85px;font-weight:bold;color:#1f2b3b">输配电总成本</div>
<div class="t" style="left:76.8px;top:430.8px;font-size:7.85px;font-weight:bold;color:#1f2b3b">输配电总成本</div>
<div class="t" style="left:250.5px;top:291.7px;font-size:10.4px;font-weight:bold;color:#1f2b3b">162,973.66</div>
<div class="t" style="left:252.7px;top:334px;font-size:10.4px;font-weight:bold;color:#1f2b3b">162,973.66</div>
<div class="t" style="left:249.7px;top:381px;font-size:10.4px;font-weight:bold;color:#1f2b3b">162,973.66</div>
<div class="t" style="left:249.7px;top:429.2px;font-size:10.4px;font-weight:bold;color:#1f2b3b">162,973.66</div>

</div></body></html>
